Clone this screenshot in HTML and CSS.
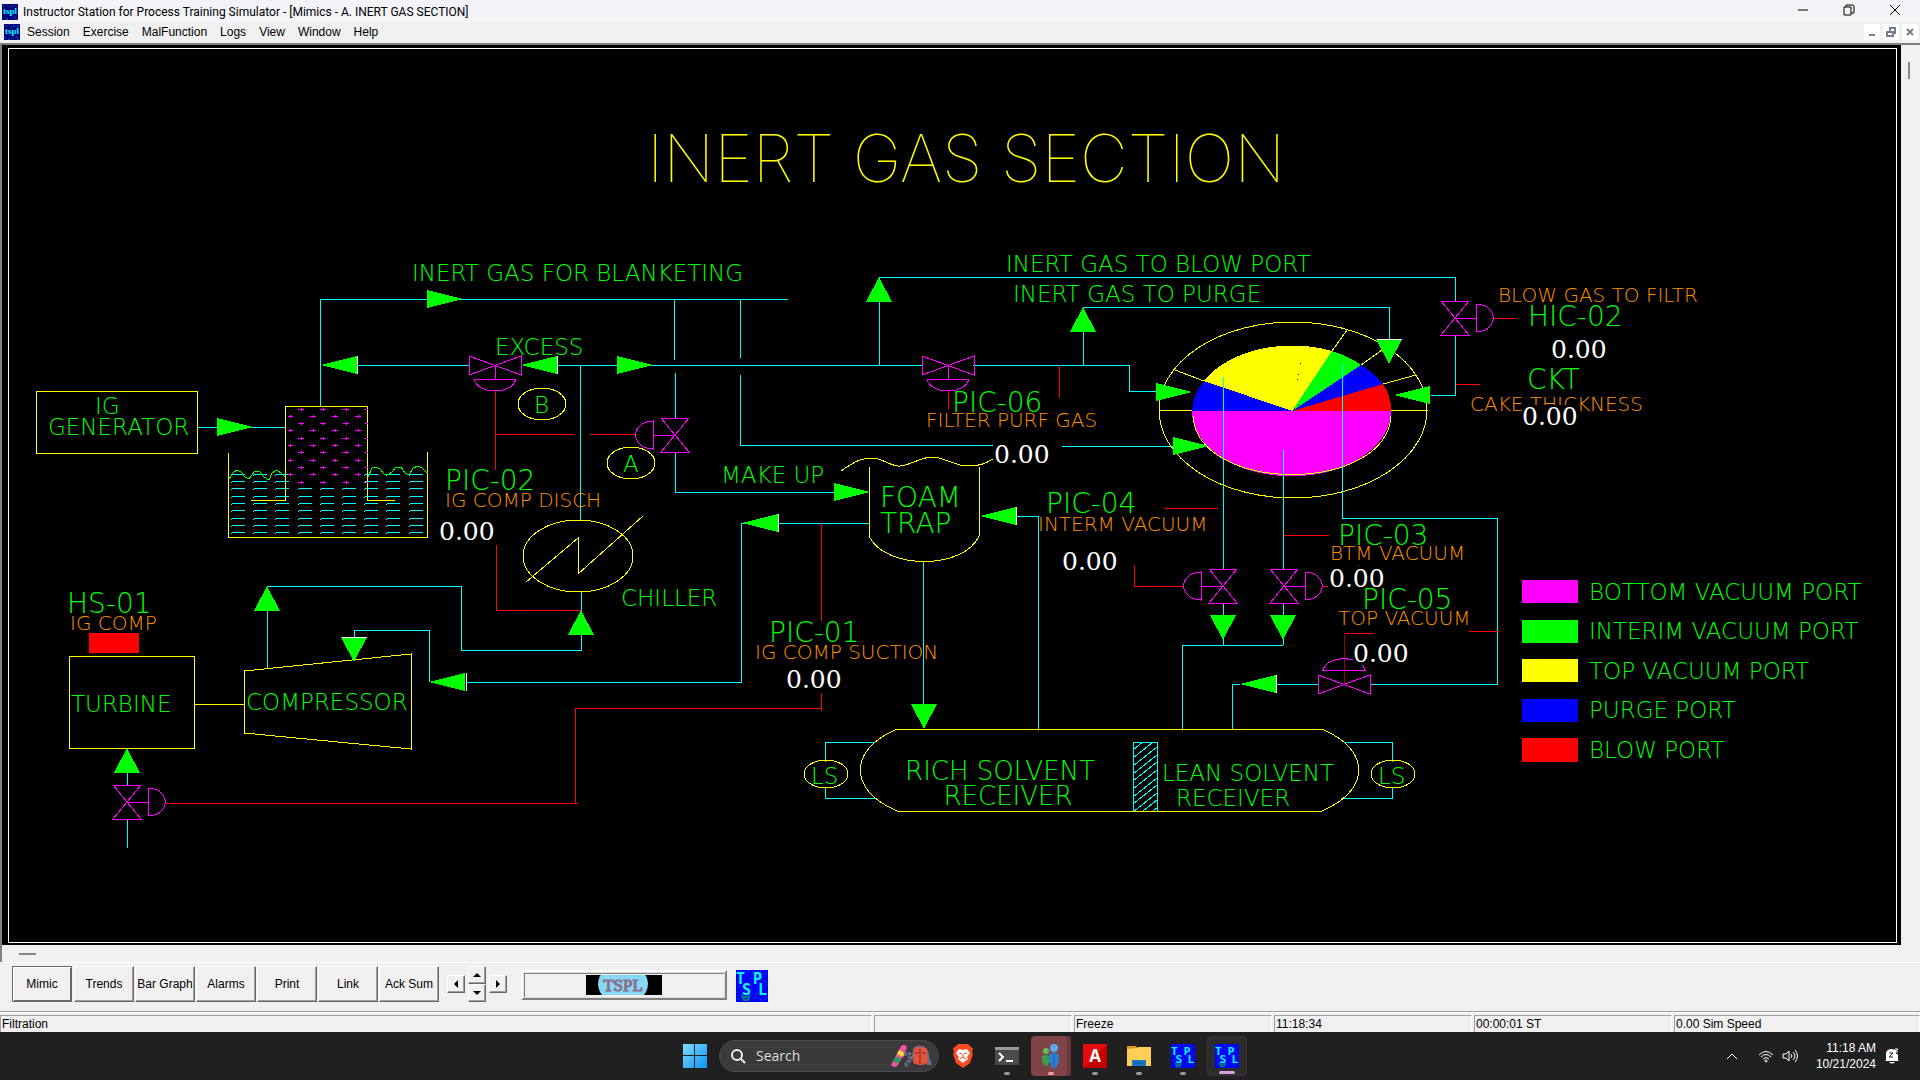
FILE: index.html
```html
<!DOCTYPE html>
<html lang="en">
<head>
<meta charset="utf-8">
<title>Instructor Station for Process Training Simulator</title>
<link rel="stylesheet" href="styles.css">
</head>
<body>
<svg class="defs" aria-hidden="true">
  <defs>
    <symbol id="tspl" viewBox="0 0 16 16">
      <rect width="16" height="16" fill="#000080"/>
      <path d="M1 2h2m2-1h1m3 1h2m2 0h2M1 14h1m2 1h2m3-1h1m3 1h2M7 3h1m4 10h1" stroke="#008080"/>
      <text x="8" y="10" class="tspl-text">tspl</text>
    </symbol>
    <symbol id="tpsl" viewBox="0 0 32 32">
      <rect width="32" height="32" fill="#0000ff"/>
      <path d="M3 16h1m1 4h1m-2 5h1m3-2h1m-4 5h1m8-12h1m6 0h1m5 2h1m-8 6h1m3 6h2m3-3h1M16 3h1m-3 5h1m15-4h1m-2 7h1M2 12h1m9 2h1m7 11h1M7 30h2m13-2h1M3 2h1m8-1h1m11 0h1m5 14h1M1 22h1m0 7h1m15-1h1m9 1h1" stroke="#008080"/>
      <path d="M6 25l2 5h4l2-5M8 27h4" stroke="#008080" stroke-width="2" fill="none"/>
      <text class="tpsl-text"><tspan x="0" y="14">T</tspan><tspan x="17" y="14">P</tspan><tspan x="6" y="25">S</tspan><tspan x="22" y="25">L</tspan></text>
    </symbol>
    <path id="arrow-right" d="M0 0L-36-9V9z"/>
    <path id="arrow-left" d="M0 0L36-9V9z"/>
    <path id="arrow-up" d="M0 0L13 25H-13z"/>
    <path id="arrow-down" d="M0 0L13-25H-13z"/>
    <path id="valve-v" d="M-14-17H14L-14 17H14z"/>
    <path id="valve-h" d="M-26-9V10L26-9V10z"/>
    <path id="dome-right" d="M0 0H21M21-14C44-13 44 13 21 14z"/>
    <path id="dome-left" d="M0 0H-22M-22-14C-45-13-45 13-22 14z"/>
    <path id="dome-down" d="M0 0V14M-21 14H21C17 30-17 30-21 14z"/>
    <path id="dome-up" d="M-21-14H21C17-29-17-29-21-14z"/>
    <path id="cross-row-a" d="M298 0h6M301-1v3M320 0h6M323-1v3M343 0h6M346-1v3M365 0h3"/>
    <path id="cross-row-b" d="M288 0h5M290-1v3M310 0h6M313-1v3M332 0h6M335-1v3M355 0h6M358-1v3"/>
    <path id="dash-left" d="M231 2l2-2h12M253 2l2-2h12M275 2l2-2h12"/>
    <path id="dash-mid" d="M298 2l2-2h12M320 2l2-2h12M342 2l2-2h12"/>
    <path id="dash-right" d="M364 2l2-2h12M386 2l2-2h12M409 2l2-2h12"/>
    <clipPath id="baffle"><rect x="1133" y="742" width="24" height="69"/></clipPath>
  </defs>
</svg>

<header class="titlebar">
  <svg class="app-icon"><use href="#tspl"/></svg>
  <h1>Instructor Station for Process Training Simulator - [Mimics - A. INERT GAS SECTION]</h1>
  <div class="window-controls">
    <button aria-label="Minimize"><svg viewBox="0 0 12 12"><path d="M1 6h10"/></svg></button>
    <button aria-label="Restore"><svg viewBox="0 0 12 12"><path d="M1 3h7v8H1zM3 3V1h7l1 1v7H8"/></svg></button>
    <button aria-label="Close"><svg viewBox="0 0 12 12"><path d="M1 1l10 10M11 1L1 11"/></svg></button>
  </div>
</header>

<nav class="menubar">
  <svg class="app-icon"><use href="#tspl"/></svg>
  <button>Session</button>
  <button>Exercise</button>
  <button>MalFunction</button>
  <button>Logs</button>
  <button>View</button>
  <button>Window</button>
  <button>Help</button>
  <div class="child-controls">
    <button aria-label="Minimize child"><svg viewBox="0 0 12 12"><path d="M3 9h6"/></svg></button>
    <button aria-label="Restore child"><svg viewBox="0 0 12 12"><path d="M2 6h6v4H2zM5 5V2h5v5H9"/></svg></button>
    <button aria-label="Close child"><svg viewBox="0 0 12 12"><path d="M3 3l6 6M9 3l-6 6"/></svg></button>
  </div>
</nav>

<main class="workspace">
  <svg class="mimic" viewBox="2 45 1899 900" role="img" aria-label="Inert gas section mimic">
    <rect class="frame" x="8" y="48" width="1888" height="894"/>

    <g class="pipe">
      <path d="M198 427H285M320 406V299H788M357 365H469M557 365H922M973 365H1129V391H1156"/>
      <path d="M674 299V360M675 373V418M675 452V492H834M740 299V358M740 375V445H993M1062 446H1173"/>
      <path d="M879 365V277H1455V301M1455 336V395H1431M1083 365V307H1389V339"/>
      <path d="M580 365V520M581 592V650H461V586H267V669M466 682H741V523H869"/>
      <path d="M429 682V630H354V637M127 772V785M127 820V848"/>
      <path d="M923 561V706M1015 516H1038V729M1182 729V645H1283"/>
      <path d="M1223 603V645M1283 603V645M1240 684H1232V729M1276 684H1318M1370 684H1497V518H1342"/>
      <path d="M825 762V742H875M825 788V798H875M1392 762V742H1345M1392 788V798H1341"/>
      <rect x="1133" y="742" width="24" height="69"/>
      <path clip-path="url(#baffle)" d="M1133 750l12-10M1133 758l24-19M1133 766l24-19M1133 774l24-19M1133 781l24-19M1133 789l24-19M1133 797l24-19M1133 804l24-19M1133 812l24-19M1138 815l24-19M1148 815l24-19"/>
      <use href="#dash-left" y="474"/><use href="#dash-right" y="474"/>
      <use href="#dash-left" y="481"/><use href="#dash-right" y="481"/>
      <use href="#dash-left" y="488"/><use href="#dash-mid" y="488"/><use href="#dash-right" y="488"/>
      <use href="#dash-left" y="496"/><use href="#dash-mid" y="496"/><use href="#dash-right" y="496"/>
      <use href="#dash-left" y="503"/><use href="#dash-mid" y="503"/><use href="#dash-right" y="503"/>
      <use href="#dash-left" y="510"/><use href="#dash-mid" y="510"/><use href="#dash-right" y="510"/>
      <use href="#dash-left" y="518"/><use href="#dash-mid" y="518"/><use href="#dash-right" y="518"/>
      <use href="#dash-left" y="525"/><use href="#dash-mid" y="525"/><use href="#dash-right" y="525"/>
      <use href="#dash-left" y="532"/><use href="#dash-mid" y="532"/><use href="#dash-right" y="532"/>
    </g>

    <g class="signal">
      <path d="M495 391V470M495 434H574M590 434H636M496 545V610H581M948 391V409M1059 365V398"/>
      <path d="M821 523V621M821 693V711M821 708H575V803M578 803H166"/>
      <path d="M1493 318H1516M1456 384H1480M1165 508H1218M1284 535H1329M1184 586H1134V565M1322 586H1328M1358 565v1M1469 631H1499M1344 633H1374"/>
      <path class="faded" d="M1344 633V684"/>
    </g>

    <g class="vessel">
      <rect x="36" y="391" width="161" height="62"/>
      <path d="M251 500H285V406H367V500H395M228 453V537H427V452"/>
      <rect x="69" y="656" width="125" height="92"/>
      <path d="M194 704H244M244 671L411 654V749L244 733z"/>
      <ellipse cx="578" cy="556" rx="55" ry="36"/>
      <path d="M526 582L578 538V574L643 516"/>
      <ellipse cx="542" cy="404" rx="24" ry="16"/>
      <ellipse cx="631" cy="463" rx="24" ry="16"/>
      <path d="M869 467V536C885 570 964 570 979 536V467"/>
      <path d="M841 471C855 461 862 458 872 458S888 465 898 466S920 457 932 457S955 466 967 466S985 464 993 459"/>
      <path d="M897 729H1322C1371 750 1371 790 1322 811H897C848 790 848 750 897 729z"/>
      <ellipse cx="826" cy="774" rx="22" ry="14"/>
      <ellipse cx="1393" cy="774" rx="22" ry="14"/>
      <ellipse cx="1293" cy="410" rx="134" ry="88"/>
      <path d="M1159 410H1192M1391 410H1428M1204 381L1175 370M1332 351L1347 330M1361 365L1382 350M1383 384L1416 375"/>
    </g>

    <g class="ports">
      <path class="bottom" d="M1192 411A99 65 0 0 0 1391 411z"/>
      <path class="purge" d="M1292 411H1192A99 65 0 0 1 1204 381z"/>
      <path class="top" d="M1292 411L1204 381A99 65 0 0 1 1332 351z"/>
      <path class="interim" d="M1292 411L1332 351A99 65 0 0 1 1361 365z"/>
      <path class="purge" d="M1292 411L1361 365A99 65 0 0 1 1383 384z"/>
      <path class="blow" d="M1292 411L1383 384A99 65 0 0 1 1391 411z"/>
    </g>
    <path class="specks" d="M1300 363h1M1298 374h1M1297 379h1M1298 405h1M1309 402h1M1294 408h1"/>
    <path class="rim" d="M1193 416C1198 494 1386 494 1391 416"/>
    <path class="pipe" d="M1223 377V569M1283 450V569M1342 364V518"/>

    <g class="valves">
      <use href="#valve-h" x="495" y="365"/><use href="#dome-down" x="495" y="365"/>
      <use href="#valve-h" x="948" y="365"/><use href="#dome-down" x="948" y="365"/>
      <use href="#valve-h" x="1344" y="684"/><use href="#dome-up" x="1344" y="684"/>
      <use href="#valve-v" x="675" y="435"/><use href="#dome-left" x="675" y="435"/>
      <use href="#valve-v" x="1455" y="318"/><use href="#dome-right" x="1455" y="318"/>
      <use href="#valve-v" x="1223" y="586"/><use href="#dome-left" x="1223" y="586"/>
      <use href="#valve-v" x="1284" y="586"/><use href="#dome-right" x="1284" y="586"/>
      <use href="#valve-v" x="127" y="802"/><use href="#dome-right" x="127" y="802"/>
      <use href="#cross-row-a" y="409"/><use href="#cross-row-b" y="416"/>
      <use href="#cross-row-a" y="423"/><use href="#cross-row-b" y="430"/>
      <use href="#cross-row-a" y="438"/><use href="#cross-row-b" y="445"/>
      <use href="#cross-row-a" y="452"/><use href="#cross-row-b" y="460"/>
      <use href="#cross-row-a" y="467"/><use href="#cross-row-b" y="474"/>
      <use href="#cross-row-a" y="482"/>
    </g>

    <g class="arrows">
      <use href="#arrow-right" x="463" y="299"/>
      <use href="#arrow-right" x="253" y="427"/>
      <use href="#arrow-right" x="653" y="365"/>
      <use href="#arrow-right" x="870" y="492"/>
      <use href="#arrow-right" x="1192" y="392"/>
      <use href="#arrow-right" x="1209" y="446"/>
      <use href="#arrow-left" x="321" y="365"/>
      <use href="#arrow-left" x="521" y="365"/>
      <use href="#arrow-left" x="742" y="523"/>
      <use href="#arrow-left" x="429" y="682"/>
      <use href="#arrow-left" x="980" y="516"/>
      <use href="#arrow-left" x="1240" y="684"/>
      <use href="#arrow-left" x="1394" y="395"/>
      <use href="#arrow-up" x="267" y="586"/>
      <use href="#arrow-up" x="581" y="610"/>
      <use href="#arrow-up" x="127" y="748"/>
      <use href="#arrow-up" x="879" y="277"/>
      <use href="#arrow-up" x="1083" y="307"/>
      <use href="#arrow-down" x="354" y="662"/>
      <use href="#arrow-down" x="924" y="729"/>
      <use href="#arrow-down" x="1223" y="640"/>
      <use href="#arrow-down" x="1283" y="640"/>
      <use href="#arrow-down" x="1389" y="364"/>
    </g>
    <path class="edge" d="M357 356V374M557 356V374M778 514V532M466 673V691M1016 507V525M1276 675V693M342 637H367M1377 339H1402"/>
    <path class="waves" d="M229 479L233 473 237 470 241 472 245 477 249 479 252 475 255 471 260 472 264 477 269 480 272 473 277 470 281 473 285 477M368 477L372 468 376 467 380 469 384 474 388 475 392 472 396 467 401 467 405 473 409 475 413 468 418 466 422 468 426 472 428 473"/>

    <rect class="blow" x="89" y="633" width="50" height="20"/>
    <rect class="bottom" x="1522" y="580" width="56" height="23"/>
    <rect class="interim" x="1522" y="620" width="56" height="23"/>
    <rect class="top" x="1522" y="659" width="56" height="23"/>
    <rect class="purge" x="1522" y="699" width="56" height="23"/>
    <rect class="blow" x="1522" y="738" width="56" height="24"/>

    <text class="heading" x="966" y="182">INERT GAS SECTION</text>

    <g class="label">
      <text x="412" y="281">INERT GAS FOR BLANKETING</text>
      <text x="495" y="355">EXCESS</text>
      <text x="95" y="414">IG</text>
      <text x="48" y="435">GENERATOR</text>
      <text x="534" y="413">B</text>
      <text x="623" y="472">A</text>
      <text x="71" y="712">TURBINE</text>
      <text x="246" y="710">COMPRESSOR</text>
      <text x="621" y="606">CHILLER</text>
      <text x="721" y="483">MAKE UP</text>
      <text x="1006" y="272">INERT GAS TO BLOW PORT</text>
      <text x="1013" y="302">INERT GAS TO PURGE</text>
      <text x="1162" y="781">LEAN SOLVENT</text>
      <text x="1176" y="806">RECEIVER</text>
      <text x="811" y="784">LS</text>
      <text x="1378" y="784">LS</text>
      <text x="1589" y="600">BOTTOM VACUUM PORT</text>
      <text x="1589" y="639">INTERIM VACUUM PORT</text>
      <text x="1589" y="679">TOP VACUUM PORT</text>
      <text x="1589" y="718">PURGE PORT</text>
      <text x="1589" y="758">BLOW PORT</text>
    </g>

    <g class="tag">
      <text x="445" y="490">PIC-02</text>
      <text x="67" y="613">HS-01</text>
      <text x="769" y="642">PIC-01</text>
      <text x="1046" y="513">PIC-04</text>
      <text x="952" y="412">PIC-06</text>
      <text x="1338" y="545">PIC-03</text>
      <text x="1362" y="609">PIC-05</text>
      <text x="1528" y="326">HIC-02</text>
      <text x="1527" y="389">CKT</text>
      <text x="880" y="507">FOAM</text>
      <text x="880" y="533">TRAP</text>
    </g>
    <g class="wide">
      <text x="1000" y="780">RICH SOLVENT</text>
      <text x="1008" y="805">RECEIVER</text>
    </g>

    <g class="note">
      <text x="445" y="507">IG COMP DISCH</text>
      <text x="70" y="630">IG COMP</text>
      <text x="755" y="659">IG COMP SUCTION</text>
      <text x="1038" y="531">INTERM VACUUM</text>
      <text x="926" y="427">FILTER PURF GAS</text>
      <text x="1330" y="560">BTM VACUUM</text>
      <text x="1338" y="625">TOP VACUUM</text>
      <text x="1498" y="302">BLOW GAS TO FILTR</text>
      <text x="1470" y="411">CAKE THICKNESS</text>
    </g>

    <g class="mask">
      <rect x="1522" y="405" width="58" height="22"/>
      <rect x="1353" y="644" width="60" height="21"/>
    </g>
    <g class="value">
      <text x="439" y="540">0.00</text>
      <text x="786" y="688">0.00</text>
      <text x="1062" y="570">0.00</text>
      <text x="994" y="463">0.00</text>
      <text x="1329" y="587">0.00</text>
      <text x="1353" y="662">0.00</text>
      <text x="1551" y="358">0.00</text>
      <text x="1522" y="425">0.00</text>
    </g>
  </svg>
  <div class="scroll-y"><div class="thumb"></div></div>
  <div class="scroll-x"><div class="thumb"></div></div>
</main>

<section class="toolbar">
  <div class="modes">
    <button class="active">Mimic</button>
    <button>Trends</button>
    <button>Bar Graph</button>
    <button>Alarms</button>
    <button>Print</button>
    <button>Link</button>
    <button>Ack Sum</button>
  </div>
  <div class="pager">
    <button class="left" aria-label="Left"><svg viewBox="0 0 8 8"><path d="M6 0v8L2 4z"/></svg></button>
    <button class="up" aria-label="Up"><svg viewBox="0 0 8 8"><path d="M0 6h8L4 2z"/></svg></button>
    <button class="down" aria-label="Down"><svg viewBox="0 0 8 8"><path d="M0 2h8L4 6z"/></svg></button>
    <button class="right" aria-label="Right"><svg viewBox="0 0 8 8"><path d="M2 0v8l4-4z"/></svg></button>
  </div>
  <div class="banner">
    <svg viewBox="0 0 76 20">
      <rect width="76" height="20" fill="#000"/>
      <ellipse cx="37" cy="9" rx="25" ry="20" fill="#87d7f7"/>
      <text x="37" y="16">TSPL</text>
    </svg>
  </div>
  <svg class="brand"><use href="#tpsl"/></svg>
</section>

<footer class="statusbar">
  <div>Filtration</div><div></div><div>Freeze</div><div>11:18:34</div><div>00:00:01 ST</div><div>0.00 Sim Speed</div>
</footer>

<section class="taskbar">
  <div class="apps">
    <button class="start" aria-label="Start"><svg viewBox="0 0 24 24"><defs><linearGradient id="win" x2="1" y2="1"><stop stop-color="#7fdcff"/><stop offset="1" stop-color="#0a93f5"/></linearGradient></defs><path fill="url(#win)" d="M0 0h11v11H0zM12 0h12v11H12zM0 12h11v12H0zM12 12h12v12H12z"/></svg></button>
    <label class="search">
      <svg class="lens" viewBox="0 0 16 16"><circle cx="7" cy="7" r="5"/><path d="M11 11l4 4"/></svg>
      <input type="text" placeholder="Search" aria-label="Search">
      <svg class="art" viewBox="0 0 42 24">
        <path d="M11 2q5-3 6 2L8 21q-3 4-7 0z" fill="#f0559a"/><path d="M9 6l6 3-2 4-6-3z" fill="#ffd23f"/><circle cx="7" cy="16" r="3" fill="#19a35b"/>
        <path d="M14 10q8-2 6 4t-6 8" stroke="#6d6a86" stroke-width="4" fill="none" stroke-dasharray="3 1"/>
        <path d="M23 5q4-6 11-2 5 3 5 9l3 9h-5l-3-8H24l-3 5z" fill="#6d6a86"/>
        <path d="M24 5l4-3 2 3 3-3 4 3 1 14q-8 4-15 0z" fill="#e5533d"/><path d="M30 5v15M25 9h4m3 0h4" stroke="#7a2b2b"/>
      </svg>
    </label>
    <button class="app" aria-label="Brave"><svg viewBox="0 0 24 24"><path d="M7 0h10l3 3 2 1-1 4 1 2-3 9-7 5-7-5-3-9 1-2-1-4 2-1z" fill="#fb4b1f"/><path d="M8 5l4 1 4-1 3 4-3 4 1 2-5 4-5-4 1-2-3-4z" fill="#fff"/><path d="M8 9l3 1M16 9l-3 1M12 10v4m-3 1l3-2 3 2" stroke="#fb4b1f" fill="none"/></svg></button>
    <button class="app running" aria-label="Terminal"><svg viewBox="0 0 24 24"><path d="M0 3h24v18H0z" fill="#4a4a4a"/><path d="M0 3h24v3H0z" fill="#999"/><path d="M4 9l4 4-4 4M11 17h7" stroke="#fff" stroke-width="2" fill="none"/></svg></button>
    <button class="app running attention" aria-label="Session manager"><svg viewBox="0 0 24 24"><circle cx="7" cy="7" r="3" fill="#5fc05f"/><path d="M3 12q4-3 7 0v6l-2 4H6l-3-4z" fill="#3a9d4a"/><circle cx="15" cy="4" r="4" fill="#5aa9ea"/><path d="M10 11q5-5 10 0v6l-3 7h-4l-3-7z" fill="#2a7fd0"/><path d="M15 10v13" stroke="#1a5fa8"/></svg></button>
    <button class="app running" aria-label="Adobe"><svg viewBox="0 0 24 24"><rect width="24" height="24" fill="#e30b0b"/><path d="M0 24L24 0V24z" fill="#c40000"/><text x="12" y="18" class="a-text">A</text></svg></button>
    <button class="app running" aria-label="File Explorer"><svg viewBox="0 0 24 24"><path d="M0 2h9l2 3h-11z" fill="#d99a1c"/><path d="M0 5l10-1 1-1h13v19H0z" fill="#ffd055"/><path d="M5 22v-6h14v6z" fill="#1677c8"/><path d="M8 19h8" stroke="#0b559b"/></svg></button>
    <button class="app running" aria-label="TPSL server"><svg><use href="#tpsl"/></svg></button>
    <button class="app current" aria-label="TPSL instructor station"><svg><use href="#tpsl"/></svg></button>
  </div>
  <div class="tray">
    <svg class="chevron" viewBox="0 0 12 12"><path d="M1 9l5-5 5 5"/></svg>
    <svg class="wifi" viewBox="0 0 16 16"><path d="M1 7q7-7 14 0M3 9q5-5 10 0M5 11q3-3 6 0"/><circle cx="8" cy="13" r="1"/></svg>
    <svg class="sound" viewBox="0 0 16 16"><path d="M1 6h3l3-3v10l-3-3H1zM9 6q2 2 0 4M11 4q4 4 0 8M13 2q5 6 0 12"/></svg>
    <div class="clock"><time>11:18 AM</time><time>10/21/2024</time></div>
    <svg class="bell" viewBox="0 0 16 16"><path d="M2 12V6q0-5 6-5l4 1v4h2v6l1 1H1zM5 14h6q-3 3-6 0z" fill="#fff"/><path d="M5 5h4L5 9h4" stroke="#222" fill="none"/><path d="M11 1h3l-3 3h3" stroke="#fff" fill="none"/></svg>
  </div>
</section>
</body>
</html>
```
FILE: styles.css
```css
* { box-sizing: border-box; }

body {
  margin: 0;
  min-height: 100vh;
  display: flex;
  flex-direction: column;
  background: #f0f0f0;
  color: #000;
  font: 12px/16px "Liberation Sans", Arial, sans-serif;
}

button {
  margin: 0;
  padding: 0;
  border: 0;
  background: none;
  color: inherit;
  font: inherit;
}

.defs { position: absolute; width: 0; height: 0; }
.app-icon { width: 16px; height: 16px; flex: none; }
.tspl-text { font: bold 9px "Liberation Serif", serif; fill: #00ffff; text-anchor: middle; }
.tpsl-text { font: bold 15px "DejaVu Sans Mono", monospace; fill: #00ffff; }

/* Title bar and menu */
.titlebar {
  display: flex;
  align-items: center;
  height: 23px;
  padding: 0 2px;
  background: #f3f3f8;
}
.titlebar h1 {
  margin: 0 0 0 5px;
  flex: 1;
  font: 12px/16px Roboto, "Noto Sans", sans-serif;
}
.window-controls { display: flex; }
.window-controls button { width: 46px; height: 22px; }
.window-controls svg { width: 12px; height: 12px; fill: none; stroke: #000; }

.menubar {
  display: flex;
  align-items: center;
  gap: 13px;
  height: 20px;
  padding: 0 2px 2px 4px;
}
.menubar .app-icon { margin-right: -6px; }
.child-controls { display: flex; gap: 3px; margin-left: auto; }
.child-controls button {
  display: grid;
  place-items: center;
  width: 16px;
  height: 16px;
  background: #fff;
}
.child-controls svg { width: 12px; height: 12px; fill: none; stroke: #708090; stroke-width: 2; }

/* Mimic window */
.workspace {
  flex: 1;
  min-height: 0;
  display: grid;
  grid-template-columns: 1fr 17px;
  grid-template-rows: 1fr 17px;
  padding-right: 2px;
  border: solid #808080;
  border-width: 2px 0 0 2px;
}
.mimic { display: block; width: 100%; height: 100%; background: #000; shape-rendering: crispEdges; }
.scroll-y { padding: 17px 7px; }
.scroll-y .thumb { width: 2px; height: 17px; background: #888; }
.scroll-x { padding: 8px 17px; }
.scroll-x .thumb { width: 17px; height: 2px; background: #888; }

.frame { fill: none; stroke: #fff; }
.pipe { fill: none; stroke: #00ffff; }
.signal { fill: none; stroke: #ff0000; }
.faded { stroke: #a00000; }
.vessel, .rim { fill: none; stroke: #ffff00; }
.valves { fill: none; stroke: #ff00ff; }
.arrows { fill: #00ff00; }
.edge { stroke: #fff; }
.specks { stroke: #000; }
.waves { fill: none; stroke: #00ff00; }
.mask { fill: #000; }
.bottom { fill: #ff00ff; }
.interim { fill: #00ff00; }
.top { fill: #ffff00; }
.purge { fill: #0000ff; }
.blow { fill: #ff0000; }

.heading { font: 100 66px Inter, sans-serif; fill: #ffff00; text-anchor: middle; }
.label { font: 200 23px "DejaVu Sans", sans-serif; fill: #00ff00; }
.tag { font: 200 28px "DejaVu Sans", sans-serif; fill: #00ff00; }
.wide { font: 200 26px "DejaVu Sans", sans-serif; fill: #00ff00; text-anchor: middle; }
.note { font: 200 20px "DejaVu Sans", sans-serif; fill: #ff9000; }
.value { font: 25px "DejaVu Serif", serif; fill: #fff; }

/* Toolbar */
.toolbar {
  display: flex;
  align-items: flex-start;
  height: 50px;
  padding: 3px 12px;
  border-top: 1px solid #fff;
  border-bottom: 1px solid #a0a0a0;
}
.modes { display: flex; gap: 1px; }
.modes button, .pager button {
  border: 1px solid;
  border-color: #fff #696969 #696969 #fff;
  box-shadow: inset -1px -1px #a0a0a0;
}
.modes button { width: 60px; height: 36px; white-space: nowrap; }
.modes button.active { border-color: #696969; box-shadow: inset 1px 1px #fff, inset -1px -1px #696969; }
.modes button.active + button { margin-left: 1px; }
.pager {
  display: grid;
  grid-template: repeat(4, 9px) / repeat(3, 18px);
  gap: 0 3px;
  margin-left: 8px;
}
.pager button { display: grid; place-items: center; width: 18px; height: 18px; }
.pager .left { grid-area: 2 / 1 / 4 / 2; }
.pager .up { grid-area: 1 / 2 / 3 / 3; }
.pager .down { grid-area: 3 / 2 / 5 / 3; }
.pager .right { grid-area: 2 / 3 / 4 / 4; }
.pager svg { width: 8px; height: 8px; }
.banner {
  display: grid;
  place-items: center;
  width: 206px;
  height: 30px;
  margin: 4px 9px 0 14px;
  border: 2px solid;
  border-color: #fff #808080 #808080 #fff;
  outline: 1px solid #ddd;
  outline-offset: -3px;
  box-shadow: inset 2px 2px #808080;
}
.banner svg { width: 76px; height: 20px; }
.banner text { font: 17px "Liberation Serif", serif; fill: #8a6f86; stroke: #8a6f86; text-anchor: middle; }
.brand { width: 32px; height: 32px; margin-top: 4px; }

/* Status bar */
.statusbar {
  display: grid;
  grid-template-columns: 1fr repeat(4, 198px) 246px;
  gap: 2px;
  height: 20px;
  padding: 2px 0 1px;
  border-top: 1px solid #fff;
}
.statusbar div { padding-left: 1px; border: 1px solid; border-color: #a0a0a0 #fff #fff #a0a0a0; line-height: 16px; }

/* Taskbar */
.taskbar {
  position: relative;
  display: flex;
  align-items: center;
  justify-content: center;
  height: 48px;
  background: #202020;
  color: #fff;
}
.apps { display: flex; align-items: center; margin-left: 12px; }
.start { width: 24px; height: 24px; margin-right: 12px; }
.start svg { width: 24px; height: 24px; }
.search {
  display: flex;
  align-items: center;
  width: 220px;
  height: 32px;
  margin-right: 2px;
  padding: 0 6px 0 10px;
  border: 1px solid #4a4a4a;
  border-radius: 16px;
  background: #3a3a3a;
}
.lens { width: 16px; height: 16px; flex: none; fill: none; stroke: #eee; stroke-width: 2; }
.search input {
  flex: 1;
  min-width: 0;
  padding: 0 0 0 10px;
  border: 0;
  outline: 0;
  background: none;
  color: #ddd;
  font: 14px/20px "Open Sans", "Noto Sans", sans-serif;
}
.search input::placeholder { color: #ddd; opacity: 1; }
.art { width: 42px; height: 24px; flex: none; }
.app {
  position: relative;
  display: grid;
  place-items: center;
  width: 40px;
  height: 40px;
  margin: 0 2px;
  border-radius: 4px;
}
.app svg { width: 24px; height: 24px; }
.running::after, .current::after {
  content: "";
  position: absolute;
  bottom: 1px;
  left: 17px;
  width: 6px;
  height: 3px;
  border-radius: 2px;
  background: #9a9a9a;
}
.attention { background: #7f4348; box-shadow: inset -4px 0 #6d383d; }
.attention::after { background: #ff9aa5; }
.current { background: #2c2c2c; border: 1px solid #333; }
.current::after { left: 11px; width: 16px; background: #d9a0e8; }
.a-text { font: bold 17px "Open Sans", sans-serif; fill: #fff; text-anchor: middle; }
.tray {
  position: absolute;
  right: 20px;
  display: flex;
  align-items: center;
  gap: 8px;
}
.tray svg { width: 16px; height: 16px; }
.chevron, .wifi, .sound { fill: none; stroke: #fff; }
.tray .chevron { width: 12px; height: 12px; margin-right: 12px; }
.clock { display: grid; margin-left: 10px; text-align: right; }
```
